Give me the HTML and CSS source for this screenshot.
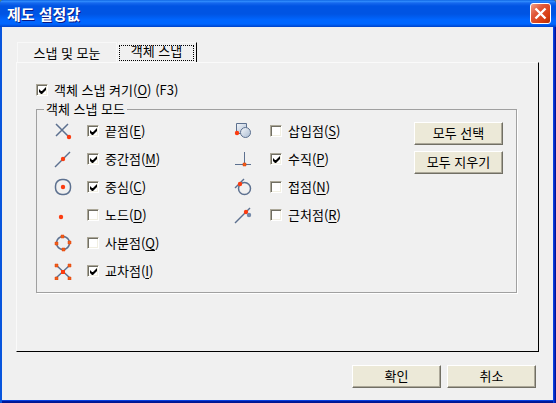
FILE: index.html
```html
<!DOCTYPE html>
<html lang="ko">
<head>
<meta charset="utf-8">
<title>제도 설정값</title>
<link rel="stylesheet" href="styles.css">
</head>
<body>
<main class="window">
  <header class="titlebar">
    <h1>제도 설정값</h1>
    <button class="close" type="button" aria-label="닫기">
      <svg width="13" height="13" viewBox="0 0 13 13"><path d="M1.500 1.500L11.500 11.500M11.500 1.500L1.500 11.500" stroke="#fff" stroke-width="2.4"/></svg>
    </button>
  </header>
  <form class="content">
    <div class="tabs" role="tablist">
      <button class="tab" type="button" role="tab" aria-selected="false">스냅 및 모눈</button>
      <button class="tab active" type="button" role="tab" aria-selected="true"><span class="focus">객체 스냅</span></button>
    </div>
    <section class="panel" role="tabpanel">
      <label class="check master"><input type="checkbox" checked><span>객체 스냅 켜기(<u>O</u>) (F3)</span></label>
      <fieldset class="modes">
        <legend>객체 스냅 모드</legend>
        <div class="column">
          <div class="mode">
            <svg class="icon" viewBox="0 0 18 18"><path d="M2 2L15 15M14 2L2 14" class="line"/><circle cx="15" cy="15" r="2.2" class="dot"/></svg>
            <label class="check"><input type="checkbox" checked><span>끝점(<u>E</u>)</span></label>
          </div>
          <div class="mode">
            <svg class="icon" viewBox="0 0 18 18"><path d="M1 17L16 2" class="line"/><circle cx="9" cy="9" r="2.2" class="dot"/></svg>
            <label class="check"><input type="checkbox" checked><span>중간점(<u>M</u>)</span></label>
          </div>
          <div class="mode">
            <svg class="icon" viewBox="0 0 18 18"><rect x="1.500" y="1.500" width="15" height="15" rx="6.500" class="line"/><circle cx="9" cy="9" r="2.2" class="dot"/></svg>
            <label class="check"><input type="checkbox" checked><span>중심(<u>C</u>)</span></label>
          </div>
          <div class="mode">
            <svg class="icon" viewBox="0 0 18 18"><circle cx="7" cy="11" r="2.2" class="dot"/></svg>
            <label class="check"><input type="checkbox"><span>노드(<u>D</u>)</span></label>
          </div>
          <div class="mode">
            <svg class="icon" viewBox="0 0 18 18"><circle cx="9" cy="9" r="6.5" class="line"/><path d="M7 1h3v3H7zM1 8h3v3H1zM14 7h3v3h-3zM8 14h3v3H8z" class="mark"/></svg>
            <label class="check"><input type="checkbox"><span>사분점(<u>Q</u>)</span></label>
          </div>
          <div class="mode">
            <svg class="icon" viewBox="0 0 18 18"><path d="M2 3L16 16M16 3L2 16" class="line"/><path d="M1 2h3v3H1zM14 2h3v3h-3zM1 15h3v3H1zM14 15h3v3h-3z" class="mark"/><path d="M7 8h4v4H7z" class="dot"/></svg>
            <label class="check"><input type="checkbox" checked><span>교차점(<u>I</u>)</span></label>
          </div>
        </div>
        <div class="column">
          <div class="mode">
            <svg class="icon" viewBox="0 0 18 18"><defs><linearGradient id="shape" x2="1" y2="1"><stop stop-color="#f5f7fa"/><stop offset="1" stop-color="#a9bbd2"/></linearGradient></defs><path d="M2.5 1.5h10v10h-10z" class="line shaped"/><circle cx="11.5" cy="10.5" r="5" class="line shaped"/><circle cx="3" cy="11" r="2.2" class="dot"/></svg>
            <label class="check"><input type="checkbox"><span>삽입점(<u>S</u>)</span></label>
          </div>
          <div class="mode">
            <svg class="icon" viewBox="0 0 18 18"><path d="M1 14.500H17M10.500 2V14" class="line thin"/><path d="M9 13h3v3H9z" class="mark"/></svg>
            <label class="check"><input type="checkbox" checked><span>수직(<u>P</u>)</span></label>
          </div>
          <div class="mode">
            <svg class="icon" viewBox="0 0 18 18"><path d="M1 10L10 1" class="line"/><circle cx="10.500" cy="10.500" r="6" class="line"/><circle cx="6" cy="6" r="2.2" class="dot"/></svg>
            <label class="check"><input type="checkbox"><span>접점(<u>N</u>)</span></label>
          </div>
          <div class="mode">
            <svg class="icon" viewBox="0 0 18 18"><path d="M1 17L16 2" class="line"/><circle cx="12" cy="6" r="2.2" class="dot"/><circle cx="15" cy="9" r="2.2" fill="#7288a8"/></svg>
            <label class="check"><input type="checkbox"><span>근처점(<u>R</u>)</span></label>
          </div>
        </div>
        <div class="actions">
          <button class="button" type="button">모두 선택</button>
          <button class="button" type="button">모두 지우기</button>
        </div>
      </fieldset>
    </section>
    <footer class="footer">
      <button class="button" type="submit">확인</button>
      <button class="button" type="button">취소</button>
    </footer>
  </form>
</main>
</body>
</html>
```
FILE: styles.css
```css
* {
  box-sizing: border-box;
}

body {
  margin: 0;
  background: #4f7f7c;
  color: #000;
  font: 13px/16px "Noto Sans CJK KR", sans-serif;
}

button {
  font: inherit;
  color: inherit;
}

.window {
  display: flex;
  flex-direction: column;
  min-height: 100vh;
  padding: 0 3px 3px 2px;
  border-radius: 4px 4px 0 0;
  background: linear-gradient(90deg, #0855dd 0 2px, transparent 2px calc(100% - 3px), #0841e0 calc(100% - 3px) calc(100% - 2px), #0014a0 calc(100% - 1px)),
    linear-gradient(0deg, #00138c 0, #001ea0 2px, #0841e0 2px 3px, #0841e0 3px);
}

.titlebar {
  display: flex;
  align-items: center;
  justify-content: space-between;
  height: 27px;
  margin: 0 -3px 0 -2px;
  padding: 0 5px 0 7px;
  border-radius: 4px 4px 0 0;
  background: linear-gradient(#0054d8 0, #3492ff 1px, #1668ee 3px, #0054e3 6px, #0054e3 14px, #0066ff 20px, #0066ff 24px, #0042c8 27px);
}

.titlebar h1 {
  margin: 0;
  color: #fff;
  font-size: 15px;
  font-weight: 700;
  text-shadow: 1px 1px #0a1883;
}

.close {
  display: flex;
  align-items: center;
  justify-content: center;
  width: 21px;
  height: 21px;
  padding: 0;
  border: 1px solid #fff;
  border-radius: 3px;
  background: linear-gradient(135deg, #f0a088 0, #e0583a 35%, #d83c10 75%, #b03008 100%);
}

.content {
  display: flex;
  flex: 1;
  flex-direction: column;
  padding: 15px 14px 12px;
  background: #f0f0f0;
}

.tabs {
  display: flex;
  gap: 1px;
  height: 20px;
  padding-left: 1px;
}

.tab {
  width: 100px;
  padding: 0;
  border: 1px solid #f8f8f8;
  border-bottom: 0;
  background: none;
  line-height: 15px;
}

.tab.active {
  width: 79px;
  padding: 2px;
  padding-left: 0;
  border-right: 1px solid #000;
}

.focus {
  display: block;
  height: 16px;
  border: 1px dotted #000;
  line-height: 10px;
}

.panel {
  flex: 1;
  padding: 19px 22px 12px 19px;
  border: 1px solid #fafafa;
  border-right-color: #000;
  border-bottom-color: #000;
}

.check {
  display: flex;
  align-items: center;
  gap: 6px;
}

.check u {
  text-underline-offset: 2px;
}

.check input {
  appearance: none;
  width: 12px;
  height: 12px;
  margin: 0;
  border: 1px solid;
  border-color: #aca899 #fff #fff #aca899;
  background: #fff center / 9px 9px no-repeat;
  box-shadow: inset 1px 1px #716f64, inset -1px -1px #f1efe2;
}

.check input:checked {
  background-image: url("data:image/svg+xml,%3Csvg xmlns='http://www.w3.org/2000/svg' viewBox='0 0 9 9'%3E%3Cpath d='M1 3v3l2 2h1l4-4V1L4 5H3z'/%3E%3C/svg%3E");
}

.modes {
  display: flex;
  align-items: flex-start;
  height: 192px;
  margin: 3px 0 0;
  padding: 0 13px 0 17px;
  border: 1px solid #a0a0a0;
  box-shadow: 1px 1px #fff;
}

.modes legend {
  margin-left: -10px;
  padding: 0 2px;
}

.column {
  width: 180px;
}

.mode {
  display: flex;
  align-items: center;
  gap: 15px;
  height: 28px;
}

.column + .column .mode {
  gap: 18px;
}

.icon {
  width: 18px;
  height: 18px;
}

.line {
  fill: none;
  stroke: #5c708f;
  stroke-width: 1.5;
}

.thin {
  stroke-width: 1;
}

.shaped {
  fill: url(#shape);
  stroke-width: 1;
}

.dot {
  fill: #fb3c10;
}

.mark {
  fill: #f06018;
  stroke: #e03c08;
  stroke-width: 0.5;
}

.actions {
  display: flex;
  flex-direction: column;
  gap: 6px;
  margin-left: auto;
  padding-top: 5px;
}

.button {
  width: 89px;
  height: 23px;
  padding: 0 0 2px;
  border: 1px solid;
  border-color: #fff #716f64 #716f64 #fff;
  background: #ece9d8;
  box-shadow: inset -1px -1px #aca899;
}

.footer {
  display: flex;
  justify-content: flex-end;
  gap: 6px;
  padding: 13px 3px 0 0;
}
```
